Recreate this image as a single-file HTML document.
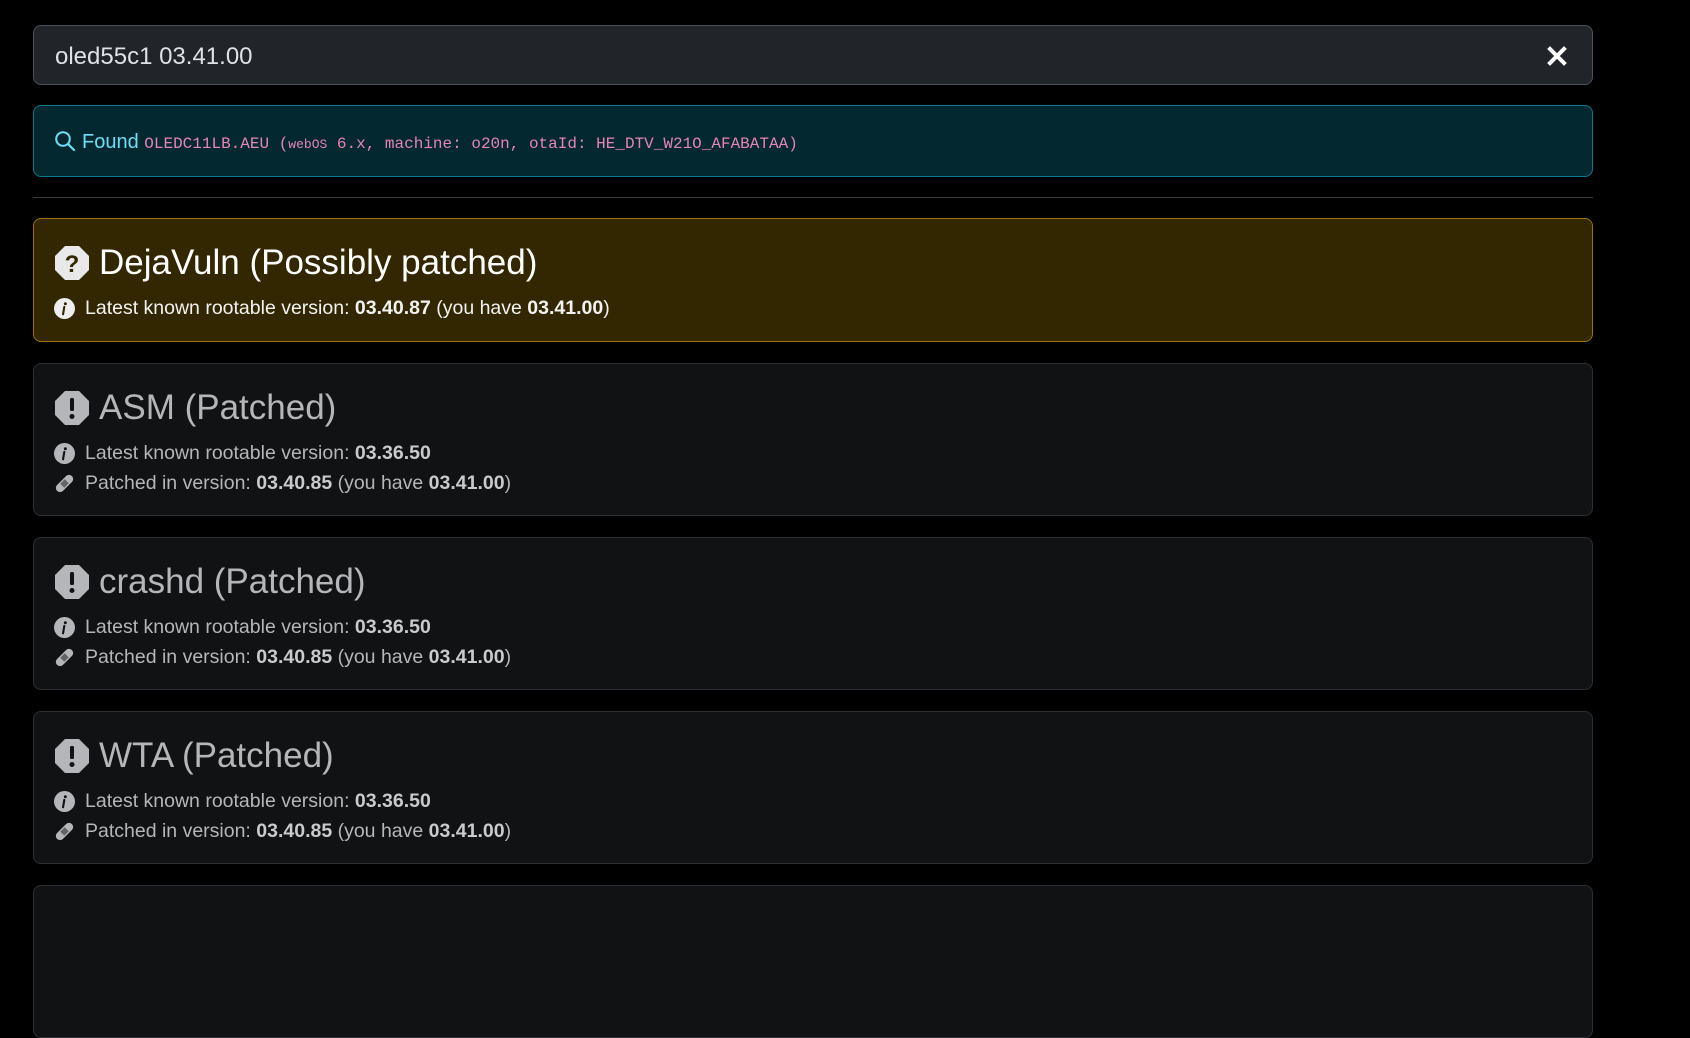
<!DOCTYPE html>
<html><head><meta charset="utf-8"><style>
*{box-sizing:border-box;margin:0;padding:0}
html,body{width:1690px;height:906px;overflow:hidden;background:#000;font-family:"Liberation Sans",sans-serif}
.wrap{position:absolute;left:33px;width:1560px}
.search{top:25px;height:60px;background:#212529;border:1px solid #495057;border-radius:8px;color:#dee2e6;font-size:24px;padding:2px 0 0 21px;line-height:58px}
.x{position:absolute;right:24px;top:19px}
.alert{top:105px;height:72px;background:#032830;border:1px solid #087990;border-radius:8px;color:#6edff6;font-size:20px;padding-left:20px;line-height:72px;white-space:nowrap}
.alert code{font-family:"Liberation Mono",monospace;color:#e685b5;font-size:16px}
.alert code small{font-size:13px}
.hr{top:197px;height:1px;background:#3a3c3f}
.card{border-radius:8px;padding:0 0 0 20px;white-space:nowrap}
.warn{top:218px;height:124px;background:#332701;border:1px solid #997404;color:#fff}
.pat{height:153px;background:#111214;border:1px solid #2c2f33;color:#b4b6b9}
.t{font-size:35px;height:38px;line-height:38px;display:flex;align-items:center;margin-top:25px}
.t svg{margin-right:9px}
.l{font-size:19.5px;line-height:30px;display:flex;align-items:center}
.l svg{margin-right:10px}
.pat .l{color:#b4b6b9}
.warn .l{color:#f2f2f2}
b{font-weight:bold}
.pat b{color:#c8cacc}
</style></head><body>
<div class="wrap search">oled55c1 03.41.00
<svg class="x" width="22" height="22" viewBox="0 0 22 22"><path d="M4 4L18 18M18 4L4 18" stroke="#fff" stroke-width="4" stroke-linecap="square"/></svg></div>
<div class="wrap alert"><svg width="22" height="22" viewBox="0 0 22 22" style="vertical-align:-4px;margin-right:6px"><circle cx="9" cy="9" r="6.8" fill="none" stroke="#6edff6" stroke-width="2"/><path d="M14 14L20 20" stroke="#6edff6" stroke-width="2.2" stroke-linecap="round"/></svg>Found <code>OLEDC11LB.AEU (<small>webOS</small> 6.x, machine: o20n, otaId: HE_DTV_W21O_AFABATAA)</code></div>
<div class="wrap hr"></div>

<div class="wrap card warn">
<div class="t"><svg width="36" height="36" viewBox="0 0 36 36"><path d="M11 1H25L35 11V25L25 35H11L1 25V11Z" fill="#e9e9e9"/><text x="18" y="27" text-anchor="middle" font-family="Liberation Sans" font-weight="bold" font-size="24" fill="#332701">?</text></svg>DejaVuln (Possibly patched)</div>
<div class="l" style="margin-top:11px"><svg width="21" height="21" viewBox="0 0 20 20"><circle cx="10" cy="10" r="10" fill="#eee"/><circle cx="10.8" cy="5.5" r="1.4" fill="#332701"/><path d="M9.8 8.5L8.6 15.5" stroke="#332701" stroke-width="2" stroke-linecap="round"/></svg>Latest known rootable version:&nbsp;<b>03.40.87</b>&nbsp;(you have&nbsp;<b>03.41.00</b>)</div>
</div>

<div class="wrap card pat" style="top:363px">
<div class="t"><svg width="36" height="36" viewBox="0 0 36 36"><path d="M11 1H25L35 11V25L25 35H11L1 25V11Z" fill="#b4b6b9"/><rect x="16" y="8" width="4" height="13" rx="1.5" fill="#111214"/><circle cx="18" cy="26.5" r="2.5" fill="#111214"/></svg>ASM (Patched)</div>
<div class="l" style="margin-top:11px"><svg width="21" height="21" viewBox="0 0 20 20"><circle cx="10" cy="10" r="10" fill="#b4b6b9"/><circle cx="10.8" cy="5.5" r="1.4" fill="#111214"/><path d="M9.8 8.5L8.6 15.5" stroke="#111214" stroke-width="2" stroke-linecap="round"/></svg>Latest known rootable version:&nbsp;<b>03.36.50</b></div>
<div class="l"><svg width="21" height="21" viewBox="0 0 20 20"><g transform="rotate(-45 10 10)"><rect x="0" y="6" width="20" height="8" rx="4" fill="#b4b6b9"/><rect x="7" y="7.3" width="6" height="5.4" fill="#111214" opacity=".5"/></g></svg>Patched in version:&nbsp;<b>03.40.85</b>&nbsp;(you have&nbsp;<b>03.41.00</b>)</div>
</div>

<div class="wrap card pat" style="top:537px">
<div class="t"><svg width="36" height="36" viewBox="0 0 36 36"><path d="M11 1H25L35 11V25L25 35H11L1 25V11Z" fill="#b4b6b9"/><rect x="16" y="8" width="4" height="13" rx="1.5" fill="#111214"/><circle cx="18" cy="26.5" r="2.5" fill="#111214"/></svg>crashd (Patched)</div>
<div class="l" style="margin-top:11px"><svg width="21" height="21" viewBox="0 0 20 20"><circle cx="10" cy="10" r="10" fill="#b4b6b9"/><circle cx="10.8" cy="5.5" r="1.4" fill="#111214"/><path d="M9.8 8.5L8.6 15.5" stroke="#111214" stroke-width="2" stroke-linecap="round"/></svg>Latest known rootable version:&nbsp;<b>03.36.50</b></div>
<div class="l"><svg width="21" height="21" viewBox="0 0 20 20"><g transform="rotate(-45 10 10)"><rect x="0" y="6" width="20" height="8" rx="4" fill="#b4b6b9"/><rect x="7" y="7.3" width="6" height="5.4" fill="#111214" opacity=".5"/></g></svg>Patched in version:&nbsp;<b>03.40.85</b>&nbsp;(you have&nbsp;<b>03.41.00</b>)</div>
</div>

<div class="wrap card pat" style="top:711px">
<div class="t"><svg width="36" height="36" viewBox="0 0 36 36"><path d="M11 1H25L35 11V25L25 35H11L1 25V11Z" fill="#b4b6b9"/><rect x="16" y="8" width="4" height="13" rx="1.5" fill="#111214"/><circle cx="18" cy="26.5" r="2.5" fill="#111214"/></svg>WTA (Patched)</div>
<div class="l" style="margin-top:11px"><svg width="21" height="21" viewBox="0 0 20 20"><circle cx="10" cy="10" r="10" fill="#b4b6b9"/><circle cx="10.8" cy="5.5" r="1.4" fill="#111214"/><path d="M9.8 8.5L8.6 15.5" stroke="#111214" stroke-width="2" stroke-linecap="round"/></svg>Latest known rootable version:&nbsp;<b>03.36.50</b></div>
<div class="l"><svg width="21" height="21" viewBox="0 0 20 20"><g transform="rotate(-45 10 10)"><rect x="0" y="6" width="20" height="8" rx="4" fill="#b4b6b9"/><rect x="7" y="7.3" width="6" height="5.4" fill="#111214" opacity=".5"/></g></svg>Patched in version:&nbsp;<b>03.40.85</b>&nbsp;(you have&nbsp;<b>03.41.00</b>)</div>
</div>

<div class="wrap card pat" style="top:885px"></div>
</body></html>
